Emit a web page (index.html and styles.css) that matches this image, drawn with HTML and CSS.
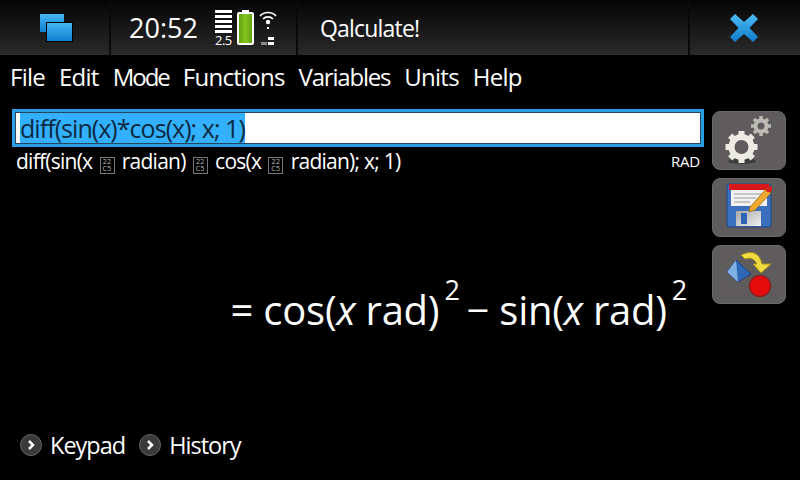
FILE: index.html
```html
<!DOCTYPE html>
<html lang="en">
<head>
<meta charset="utf-8">
<title>Qalculate!</title>
<link rel="stylesheet" href="styles.css">
</head>
<body>
<div class="screen">
  <header class="status">
    <div class="cell cell-switch">
      <svg class="ic-switch" width="36" height="30" viewBox="0 0 36 30">
        <defs><linearGradient id="bl" x1="0" y1="0" x2="0" y2="1"><stop offset="0" stop-color="#46b6f4"/><stop offset="1" stop-color="#0f80cf"/></linearGradient></defs>
        <rect x="1" y="1" width="24" height="18" fill="url(#bl)"/>
        <rect x="7" y="9" width="27" height="20" fill="#000"/>
        <rect x="8" y="10" width="25" height="18" fill="url(#bl)"/>
      </svg>
    </div>
    <div class="cell cell-status">
      <span class="clock">20:52</span>
      <div class="signal">
        <i></i><i></i><i></i><i></i><i></i>
        <span class="net">2.5</span>
      </div>
      <svg class="battery" width="18" height="36" viewBox="0 0 18 36">
        <defs><linearGradient id="bat" x1="0" y1="0" x2="1" y2="0"><stop offset="0" stop-color="#5c9c10"/><stop offset=".5" stop-color="#86c51c"/><stop offset="1" stop-color="#5c9c10"/></linearGradient></defs>
        <rect x="5" y="0" width="7" height="3" fill="#fff"/>
        <rect x="1" y="3" width="15" height="31" rx="1" fill="url(#bat)" stroke="#fff" stroke-width="2"/>
      </svg>
      <svg class="wifi" width="18" height="36" viewBox="0 0 18 36">
        <path d="M1 6 A11 11 0 0 1 17 6 M4 9 A7 7 0 0 1 14 9" fill="none" stroke="#fff" stroke-width="1.600"/>
        <circle cx="9" cy="12" r="2.200" fill="#fff"/>
        <rect x="8" y="17" width="2" height="2" fill="#fff"/>
        <rect x="2" y="32" width="6" height="3" fill="#888"/>
        <rect x="9" y="32" width="6" height="3" fill="#fff"/>
        <rect x="9" y="27" width="6" height="3" fill="#fff"/>
      </svg>
    </div>
    <div class="cell cell-title"><span class="app-title">Qalculate!</span></div>
    <div class="cell cell-close">
      <svg width="30" height="28" viewBox="0 0 30 28">
        <defs><linearGradient id="xb" x1="0" y1="0" x2="0" y2="1"><stop offset="0" stop-color="#4cbcf6"/><stop offset="1" stop-color="#0e7cc8"/></linearGradient></defs>
        <path d="M6 0 L15 8 L24 0 L29 5 L20.500 14 L29 23 L24 28 L15 20 L6 28 L1 23 L9.500 14 L1 5 Z" fill="url(#xb)"/>
      </svg>
    </div>
  </header>
  <nav class="menu">
    <span>File</span><span>Edit</span><span class="menu-mode">Mode</span><span>Functions</span><span class="menu-vars">Variables</span><span>Units</span><span>Help</span>
  </nav>
  <main class="content">
    <div class="left">
      <div class="entry"><div class="entry-inner"><span class="selected">diff(sin(x)*cos(x); x; 1)</span></div></div>
      <div class="parsed">
        <span class="expr">diff(sin(x <span class="tofu">22<br>C5</span> radian) <span class="tofu">22<br>C5</span> cos(x <span class="tofu">22<br>C5</span> radian); x; 1)</span>
        <span class="mode">RAD</span>
      </div>
      <div class="result">= cos(<em>x</em> rad)<sup>2</sup><span class="minus">−</span> sin(<em>x</em> rad)<sup>2</sup></div>
      <div class="expanders">
        <span class="expander"><svg width="22" height="22" viewBox="0 0 22 22"><circle cx="11" cy="11" r="10.500" fill="#3a3a3a" stroke="#666"/><path d="M9 7 L13 11 L9 15" fill="none" stroke="#fff" stroke-width="2.500"/></svg>Keypad</span>
        <span class="expander"><svg width="22" height="22" viewBox="0 0 22 22"><circle cx="11" cy="11" r="10.500" fill="#3a3a3a" stroke="#666"/><path d="M9 7 L13 11 L9 15" fill="none" stroke="#fff" stroke-width="2.500"/></svg>History</span>
      </div>
    </div>
    <aside class="tools">
      <button class="tool">
        <svg width="74" height="59" viewBox="0 0 74 59">
          <defs><filter id="soft" x="-20%" y="-20%" width="140%" height="140%"><feGaussianBlur stdDeviation=".6"/></filter></defs>
          <g filter="url(#soft)">
            <ellipse cx="30" cy="50" rx="14" ry="3" fill="#3c3c3c"/>
            <g fill="none" stroke="#ecece4">
              <circle cx="29.500" cy="36" r="10" stroke-width="6"/>
              <path stroke-width="6" d="M29.500 20v5M29.500 47v5M13.500 36h5M40.500 36h5M18.200 24.700l3.500 3.500M37.300 43.800l3.500 3.500M40.800 24.700l-3.500 3.500M21.700 43.800l-3.500 3.500"/>
            </g>
            <g fill="none" stroke="#bcbcb4">
              <circle cx="49" cy="15" r="5.500" stroke-width="4"/>
              <path stroke-width="3.500" d="M49 5v4M49 21v4M39 15h4M55 15h4M42 8l2.500 2.500M53.500 19.500L56 22M56 8l-2.500 2.500M44.500 19.500L42 22"/>
            </g>
          </g>
        </svg>
      </button>
      <button class="tool">
        <svg width="74" height="59" viewBox="0 0 74 59">
          <defs><linearGradient id="sh" x1="0" y1="0" x2="1" y2="1"><stop offset="0" stop-color="#a8a8a8"/><stop offset="1" stop-color="#f0f0f0"/></linearGradient></defs>
          <path d="M15 8 Q15 6 17 6 H56 Q59 6 59 9 V47 Q59 49 57 49 H18 Q15 49 15 46 Z" fill="#3a70be" stroke="#1f4686"/>
          <rect x="17" y="6" width="40" height="6" fill="#d81818"/>
          <rect x="19" y="12" width="36" height="16" fill="#f2f2f2"/>
          <path d="M22 16 H50 M22 20 H44 M22 24 H38" stroke="#b8b8b8" stroke-width="1.500"/>
          <rect x="24" y="33" width="25" height="15" fill="url(#sh)"/>
          <rect x="29" y="35" width="6" height="11" fill="#2f66b4"/>
          <path d="M38 29 L54 11 L59 15 L43 32 L37 34 Z" fill="#f0a830" stroke="#a06a10" stroke-width=".8"/>
          <circle cx="57" cy="11" r="3.200" fill="#d82020"/>
        </svg>
      </button>
      <button class="tool">
        <svg width="74" height="59" viewBox="0 0 74 59">
          <path d="M24 15 L39 29 L26 37 L15 27 Z" fill="#2f68b4" stroke="#1d3f78"/>
          <path d="M24 15 L26 37 L15 27 Z" fill="#7fb0e4"/>
          <path d="M29 10 Q46 2 50 19 L59 19 L49 28 L41 19 L45 19 Q41 11 33 14 Z" fill="#f0dc40" stroke="#a89020"/>
          <circle cx="48" cy="41" r="10.500" fill="#e60c0c" stroke="#8c2020" stroke-width="1.500"/>
        </svg>
      </button>
    </aside>
  </main>
</div>
</body>
</html>
```
FILE: styles.css
```css
* { box-sizing: border-box; }
html, body { margin: 0; padding: 0; background: #000; }
.screen {
  width: 800px; height: 480px; overflow: hidden; background: #000; color: #fff;
  display: flex; flex-direction: column;
  font-family: "Open Sans", "Noto Sans", sans-serif;
}
.status {
  height: 55px; display: flex; flex: none;
  background: linear-gradient(#050505, #2a2a2a);
}
.cell { display: flex; align-items: center; height: 100%; border-right: 2px solid #0a0a0a; }
.cell-switch { width: 111px; padding-left: 39px; }
.cell-status { width: 187px; padding-left: 18px; gap: 0; }
.cell-title { width: 392px; padding-left: 22px; }
.cell-close { flex: 1; border-right: 0; padding-left: 39px; }
.clock { font-size: 27px; width: 86px; }
.signal { width: 17px; display: flex; flex-direction: column; gap: 2px; margin-top: 1px; }
.signal i { display: block; height: 3px; background: #fff; }
.net { font-size: 13px; line-height: 11px; letter-spacing: -.5px; }
.battery { margin-left: 5px; }
.wifi { margin-left: 4px; }
.app-title { font-size: 23px; letter-spacing: -.8px; }
.menu {
  height: 43px; flex: none; display: flex; align-items: center;
  padding-left: 10px; gap: 14px; font-size: 24px; letter-spacing: -.75px;
}
.menu-mode { letter-spacing: -2px; }
.menu-vars { letter-spacing: -1.200px; }
.content { flex: 1; display: flex; padding-left: 12px; min-height: 0; }
.left { width: 692px; display: flex; flex-direction: column; padding-top: 11px; }
.entry { height: 38px; border: 3px solid #2a9fe6; background: #27445e; padding: 1px; flex: none; }
.entry-inner { height: 100%; background: #fff; padding-left: 4px; display: flex; }
.selected { background: #33b0ff; color: #0c2a40; font-size: 25px; line-height: 31px; letter-spacing: -.95px; }
.parsed {
  display: flex; justify-content: space-between; align-items: center;
  height: 28px; padding: 0 4px; font-size: 21px; letter-spacing: -.75px; flex: none;
}
.tofu {
  display: inline-block; width: 15px; height: 17px; margin: 0 2.500px; border: 1px solid #777; color: #bbb;
  font-size: 7px; line-height: 7.500px; letter-spacing: .4px; text-align: center; vertical-align: -2px;
}
.mode { font-size: 15px; letter-spacing: -.2px; }
.result {
  align-self: flex-end; margin-top: 107px; padding-right: 17px; height: 60px;
  font-size: 40px; letter-spacing: -.25px; white-space: nowrap; flex: none;
}
.result em { font-style: italic; }
.result sup { font-size: 27px; line-height: 0; vertical-align: 25px; margin-left: 5px; }
.minus { margin-left: 7px; }
.expanders { display: flex; gap: 14px; padding-left: 8px; margin-top: 87px; font-size: 23.500px; letter-spacing: -1px; align-items: center; }
.expander { display: flex; align-items: center; gap: 8px; }
.tools { display: flex; flex-direction: column; gap: 8px; padding: 13px 0 0 8px; }
.tool {
  width: 74px; height: 59px; background: #5e5c5c; border: 1px solid #6a6a6a; border-radius: 8px;
  padding: 0; display: flex; align-items: center; justify-content: center;
}
.tool svg { flex: none; }
```
